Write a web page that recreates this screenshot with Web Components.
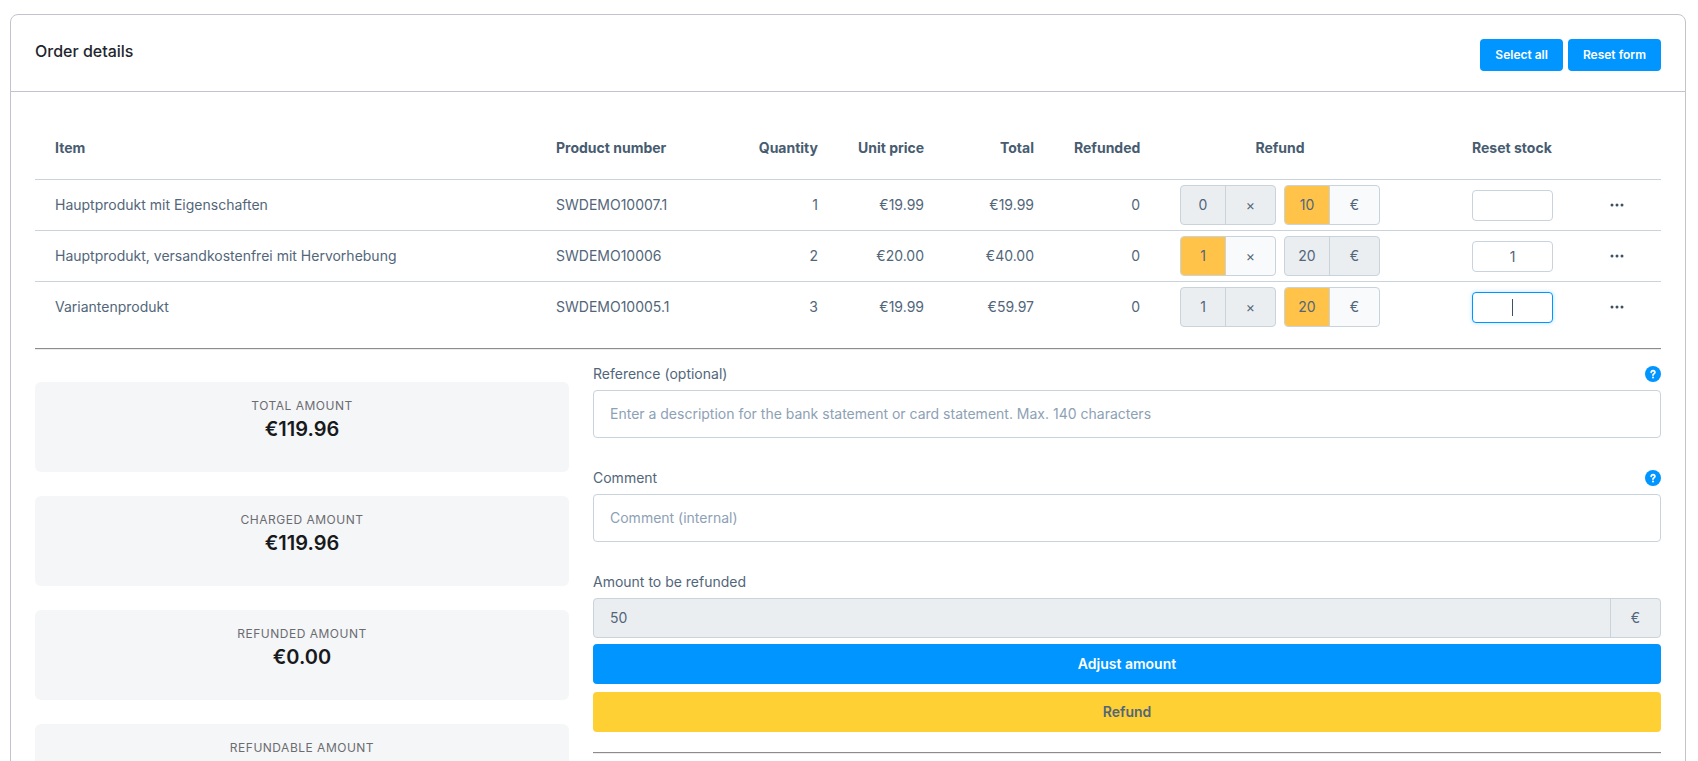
<!DOCTYPE html>
<html lang="en">
<head>
<meta charset="utf-8">
<title>Order details</title>
<style>
  html {
    scrollbar-width: none;
  }

  body {
    margin: 14px 12px 0 10px;
    font-family: Inter, "Liberation Sans", sans-serif;
    font-size: 14px;
    line-height: 16px;
    color: #52667a;
    background: #ffffff;
    --border: #c8d3db;
    --frame: #c3c3cd;
    --primary: #0095ff;
    --disabled: #ebeef1;
    --highlight: #ffc34a;
  }

  .columns {
    display: grid;
    grid-template-columns: 1fr 2fr;
    gap: 24px;
  }

  .tiles {
    display: flex;
    flex-direction: column;
    gap: 24px;
    padding-top: 16px;
  }

  .form {
    display: flex;
    flex-direction: column;
    gap: 32px;
  }

  .actions {
    display: flex;
    flex-direction: column;
    gap: 8px;
    margin-top: 6px;
  }

  hr {
    height: 2px;
    margin: 16px 0;
    border: 0;
    box-sizing: border-box;
    border-top: 1px solid #8c8c8c;
    border-bottom: 1px solid #ececec;
  }

  .form hr {
    margin: 20px 0;
  }
</style>
</head>
<body>
<order-card>
  <span slot="title">Order details</span>
  <action-button slot="toolbar" size="small">Select all</action-button>
  <action-button slot="toolbar" size="small">Reset form</action-button>

  <refund-table></refund-table>
  <hr>
  <div class="columns">
    <div class="tiles">
      <amount-tile label="Total amount">€119.96</amount-tile>
      <amount-tile label="Charged amount">€119.96</amount-tile>
      <amount-tile label="Refunded amount">€0.00</amount-tile>
      <amount-tile label="Refundable amount"></amount-tile>
    </div>
    <div class="form">
      <text-field label="Reference (optional)" placeholder="Enter a description for the bank statement or card statement. Max. 140 characters" help></text-field>
      <text-field label="Comment" placeholder="Comment (internal)" help></text-field>
      <div>
        <text-field label="Amount to be refunded" value="50" unit="€"></text-field>
        <div class="actions">
          <action-button>Adjust amount</action-button>
          <action-button variant="contrast">Refund</action-button>
        </div>
        <hr>
      </div>
    </div>
  </div>
</order-card>

<script>
class OrderCard extends HTMLElement {
  static template() {
    return `
      <style>
        :host {
          display: block;
          border: 1px solid var(--frame);
          border-radius: 8px;
        }

        header {
          display: flex;
          justify-content: space-between;
          align-items: flex-start;
          padding: 24px 24px 20px;
          border-bottom: 1px solid var(--frame);
        }

        h1 {
          margin: 0;
          font-size: 16px;
          line-height: 24px;
          font-weight: 500;
          color: #1f262e;
        }

        .toolbar {
          display: flex;
          gap: 5px;
        }

        .content {
          padding: 24px;
        }
      </style>
      <header>
        <h1><slot name="title"></slot></h1>
        <div class="toolbar"><slot name="toolbar"></slot></div>
      </header>
      <div class="content"><slot></slot></div>
    `;
  }

  constructor() {
    super();
    this.attachShadow({ mode: "open" });
    this.shadowRoot.innerHTML = OrderCard.template();
  }
}

class ActionButton extends HTMLElement {
  static template() {
    return `
      <style>
        :host {
          display: block;
        }

        button {
          width: 100%;
          height: 40px;
          padding: 0 15px;
          border: 0;
          border-radius: 4px;
          background: var(--primary);
          color: #ffffff;
          font: inherit;
          font-weight: 600;
          cursor: pointer;
        }

        :host([size="small"]) button {
          height: 32px;
          font-size: 12px;
        }

        :host([variant="contrast"]) button {
          background: #ffd033;
          color: #52667a;
        }
      </style>
      <button type="button"><slot></slot></button>
    `;
  }

  constructor() {
    super();
    this.attachShadow({ mode: "open" });
    this.shadowRoot.innerHTML = ActionButton.template();
  }
}

class AmountTile extends HTMLElement {
  static template() {
    return `
      <style>
        :host {
          display: block;
          box-sizing: border-box;
          height: 90px;
          padding-top: 16px;
          border-radius: 6px;
          background: #f5f6f8;
          text-align: center;
        }

        .label {
          font-size: 12px;
          line-height: 16px;
          letter-spacing: 0.5px;
          text-transform: uppercase;
          color: #6b6c70;
        }

        .value {
          font-size: 20px;
          line-height: 30px;
          font-weight: 600;
          color: #17191c;
        }
      </style>
      <div class="label"></div>
      <div class="value"><slot></slot></div>
    `;
  }

  constructor() {
    super();
    this.attachShadow({ mode: "open" });
    this.shadowRoot.innerHTML = AmountTile.template();
  }

  connectedCallback() {
    this.shadowRoot.querySelector(".label").textContent = this.getAttribute("label");
  }
}

class HelpIcon extends HTMLElement {
  static template() {
    return `
      <style>
        :host {
          display: block;
          width: 16px;
          height: 16px;
        }

        button {
          display: block;
          padding: 0;
          border: 0;
          background: none;
          cursor: pointer;
        }

        svg {
          display: block;
        }
      </style>
      <button type="button" aria-label="Help">
        <svg width="16" height="16" viewBox="0 0 16 16" fill="none">
          <circle cx="8" cy="8" r="8" fill="#0095ff"/>
          <path d="M6.200 6.300a1.850 1.700 0 1 1 2.800 1.500C8.300 8.200 8 8.400 8 9" stroke="#fff" stroke-width="1.800" stroke-linecap="round"/>
          <circle cx="8" cy="11.500" r="1" fill="#fff"/>
        </svg>
      </button>
    `;
  }

  constructor() {
    super();
    this.attachShadow({ mode: "open" });
    this.shadowRoot.innerHTML = HelpIcon.template();
  }
}

class TextField extends HTMLElement {
  static template() {
    return `
      <style>
        :host {
          display: block;
        }

        .head {
          display: flex;
          justify-content: space-between;
          margin-bottom: 8px;
        }

        .box {
          display: flex;
          box-sizing: border-box;
          height: 48px;
          border: 1px solid var(--border);
          border-radius: 4px;
          background: #ffffff;
          overflow: hidden;
        }

        input {
          flex: 1;
          min-width: 0;
          padding: 0 16px;
          border: 0;
          outline: 0;
          background: none;
          font: inherit;
          color: inherit;
        }

        input::placeholder {
          color: #8da1b5;
          opacity: 1;
        }

        .unit {
          display: none;
          width: 49px;
          border-left: 1px solid var(--border);
          align-items: center;
          justify-content: center;
        }

        :host([unit]) .box {
          height: 40px;
          background: var(--disabled);
        }

        :host([unit]) .unit {
          display: flex;
        }
      </style>
      <div class="head"><label for="field"></label></div>
      <div class="box">
        <input id="field" type="text">
        <span class="unit"></span>
      </div>
    `;
  }

  constructor() {
    super();
    this.attachShadow({ mode: "open" });
    this.shadowRoot.innerHTML = TextField.template();
  }

  connectedCallback() {
    const input = this.shadowRoot.querySelector("input");
    this.shadowRoot.querySelector("label").textContent = this.getAttribute("label");
    input.placeholder = this.getAttribute("placeholder") || "";
    input.value = this.getAttribute("value") || "";
    if (this.hasAttribute("unit")) {
      this.shadowRoot.querySelector(".unit").textContent = this.getAttribute("unit");
      input.readOnly = true;
    }
    if (this.hasAttribute("help")) {
      this.shadowRoot.querySelector(".head").appendChild(document.createElement("help-icon"));
    }
  }
}

class UnitInput extends HTMLElement {
  static template() {
    return `
      <style>
        :host {
          display: flex;
          box-sizing: border-box;
          width: 96px;
          height: 40px;
          border: 1px solid var(--border);
          border-radius: 4px;
          background: var(--disabled);
          overflow: hidden;
        }

        input {
          width: 44px;
          padding: 0;
          border: 0;
          outline: 0;
          background: none;
          font: inherit;
          color: inherit;
          text-align: center;
        }

        span {
          flex: 1;
          display: flex;
          align-items: center;
          justify-content: center;
          border-left: 1px solid var(--border);
        }

        :host([active]) {
          background: #f9fafb;
        }

        :host([active]) input {
          background: var(--highlight);
        }
      </style>
      <input type="text">
      <span><slot></slot></span>
    `;
  }

  constructor() {
    super();
    this.attachShadow({ mode: "open" });
    this.shadowRoot.innerHTML = UnitInput.template();
  }

  connectedCallback() {
    const input = this.shadowRoot.querySelector("input");
    input.value = this.getAttribute("value");
    input.setAttribute("aria-label", this.getAttribute("label"));
  }
}

class StockInput extends HTMLElement {
  static template() {
    return `
      <style>
        :host {
          display: block;
        }

        input {
          display: block;
          box-sizing: border-box;
          width: 100%;
          height: 31px;
          padding: 0 8px;
          border: 1px solid var(--border);
          border-radius: 4px;
          outline: 0;
          background: #ffffff;
          font: inherit;
          color: inherit;
          text-align: center;
        }

        /* the caret is drawn, so it does not blink */
        :host([active]) input {
          border-color: var(--primary);
          box-shadow: 0 0 4px rgba(0, 149, 255, 0.3);
          background: linear-gradient(#3d5166, #3d5166) center / 1px 17px no-repeat #ffffff;
          caret-color: transparent;
        }
      </style>
      <input type="text" aria-label="Reset stock">
    `;
  }

  constructor() {
    super();
    this.attachShadow({ mode: "open" });
    this.shadowRoot.innerHTML = StockInput.template();
  }

  connectedCallback() {
    this.shadowRoot.querySelector("input").value = this.getAttribute("value");
  }
}

const items = [
  { name: "Hauptprodukt mit Eigenschaften", number: "SWDEMO10007.1", quantity: 1, price: "€19.99", total: "€19.99", refunded: 0, count: 0, amount: 10, mode: "amount", stock: "" },
  { name: "Hauptprodukt, versandkostenfrei mit Hervorhebung", number: "SWDEMO10006", quantity: 2, price: "€20.00", total: "€40.00", refunded: 0, count: 1, amount: 20, mode: "count", stock: "1" },
  { name: "Variantenprodukt", number: "SWDEMO10005.1", quantity: 3, price: "€19.99", total: "€59.97", refunded: 0, count: 1, amount: 20, mode: "amount", stock: "", active: true }
];

class RefundTable extends HTMLElement {
  static row(item) {
    return `
      <tr>
        <td>${item.name}</td>
        <td>${item.number}</td>
        <td class="number">${item.quantity}</td>
        <td class="number">${item.price}</td>
        <td class="number">${item.total}</td>
        <td class="number">${item.refunded}</td>
        <td>
          <div class="refund">
            <unit-input label="Refund quantity" value="${item.count}" ${item.mode === "count" ? "active" : ""}>×</unit-input>
            <unit-input label="Refund amount" value="${item.amount}" ${item.mode === "amount" ? "active" : ""}>€</unit-input>
          </div>
        </td>
        <td><stock-input value="${item.stock}" ${item.active ? "active" : ""}></stock-input></td>
        <td>
          <button type="button" aria-label="Actions">
            <svg width="16" height="16" viewBox="0 0 16 16" fill="#3d5166">
              <circle cx="3" cy="8" r="1.500"/>
              <circle cx="8" cy="8" r="1.500"/>
              <circle cx="13" cy="8" r="1.500"/>
            </svg>
          </button>
        </td>
      </tr>
    `;
  }

  static template() {
    return `
      <style>
        :host {
          display: block;
        }

        table {
          width: 100%;
          table-layout: fixed;
          border-collapse: separate;
          border-spacing: 0;
        }

        th, td {
          box-sizing: border-box;
          padding: 0 20px;
          text-align: left;
          white-space: nowrap;
        }

        th {
          height: 64px;
          font-weight: 700;
          color: #475c70;
          border-bottom: 1px solid var(--border);
        }

        td {
          height: 51px;
          border-bottom: 1px solid var(--border);
        }

        tr:last-child td {
          height: 50px;
          border-bottom: 0;
        }

        .number {
          text-align: right;
        }

        .refund {
          display: flex;
          justify-content: center;
          gap: 8px;
          width: 200px;
        }

        button {
          display: block;
          margin: 0 auto;
          padding: 0;
          border: 0;
          background: none;
          cursor: pointer;
        }

        svg {
          display: block;
        }
      </style>
      <table>
        <colgroup>
          <col>
          <col style="width: 202px">
          <col style="width: 100px">
          <col style="width: 106px">
          <col style="width: 110px">
          <col style="width: 106px">
          <col style="width: 292px">
          <col style="width: 121px">
          <col style="width: 88px">
        </colgroup>
        <thead>
          <tr>
            <th>Item</th>
            <th>Product number</th>
            <th class="number">Quantity</th>
            <th class="number">Unit price</th>
            <th class="number">Total</th>
            <th class="number">Refunded</th>
            <th><div class="refund">Refund</div></th>
            <th>Reset stock</th>
            <th></th>
          </tr>
        </thead>
        <tbody>${items.map(RefundTable.row).join("")}</tbody>
      </table>
    `;
  }

  constructor() {
    super();
    this.attachShadow({ mode: "open" });
    this.shadowRoot.innerHTML = RefundTable.template();
  }
}

customElements.define("order-card", OrderCard);
customElements.define("action-button", ActionButton);
customElements.define("amount-tile", AmountTile);
customElements.define("help-icon", HelpIcon);
customElements.define("text-field", TextField);
customElements.define("unit-input", UnitInput);
customElements.define("stock-input", StockInput);
customElements.define("refund-table", RefundTable);
</script>
</body>
</html>
